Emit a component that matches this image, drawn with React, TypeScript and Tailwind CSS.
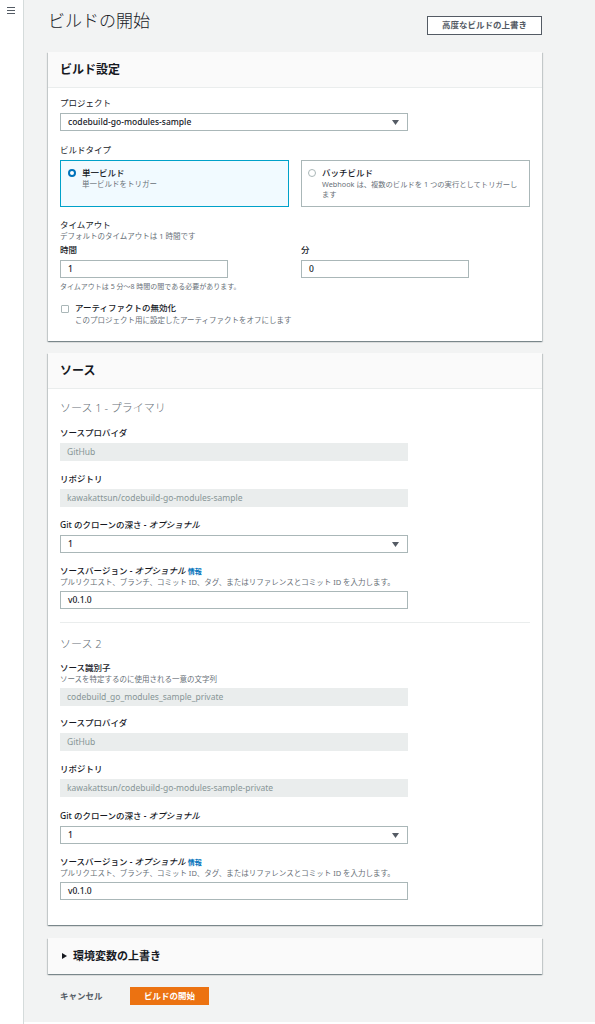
import type { ReactNode } from "react";

const cardShadow =
  "shadow-[0_1px_1px_0_rgba(0,28,36,0.3),1px_1px_1px_0_rgba(0,28,36,0.15),-1px_1px_1px_0_rgba(0,28,36,0.15)]";

function Triangle() {
  return (
    <svg width="7" height="5" viewBox="0 0 7 5" className="shrink-0">
      <path d="M0 0 H7 L3.5 5 Z" fill="#545b64" />
    </svg>
  );
}

function Label({ children, bold = true, className = "" }: { children: ReactNode; bold?: boolean; className?: string }) {
  return (
    <div className={`h-[12px] text-[8.5px] leading-[12px] text-[#16191f] ${bold ? "font-medium" : "font-normal"} ${className}`}>
      {children}
    </div>
  );
}

function Sub({ children }: { children: ReactNode }) {
  return <div className="h-[10px] text-[7.5px] leading-[10px] text-[#687078]">{children}</div>;
}

function Optional({ text }: { text: string }) {
  return (
    <>
      {text} <i className="font-medium">- オプショナル</i>
    </>
  );
}

function Select({ value, w = "w-[348px]" }: { value: string; w?: string }) {
  return (
    <div className={`mt-[4px] flex h-[18px] ${w} items-center justify-between border border-[#aab7b8] bg-white pl-[7px] pr-[8px]`}>
      <span className="text-[8.5px] font-medium text-[#16191f]">{value}</span>
      <Triangle />
    </div>
  );
}

function Input({ value, w = "w-[348px]" }: { value: string; w?: string }) {
  return (
    <div className={`mt-[4px] flex h-[18px] ${w} items-center border border-[#aab7b8] bg-white px-[7px]`}>
      <span className="text-[8.5px] font-medium text-[#16191f]">{value}</span>
    </div>
  );
}

function Disabled({ value }: { value: string }) {
  return (
    <div className="mt-[4px] flex h-[18px] w-[348px] items-center bg-[#eaeded] px-[7px]">
      <span className="text-[8.5px] text-[#879596]">{value}</span>
    </div>
  );
}

function CardHeader({ children }: { children: ReactNode }) {
  return (
    <div className="flex h-[36px] items-center border-b border-[#eaeded] bg-[#fafafa] px-[12px]">
      <h2 className="text-[12px] font-bold text-[#16191f]">{children}</h2>
    </div>
  );
}

function SourceVersion() {
  return (
    <>
      <Label className="mt-[12px]">
        <Optional text="ソースバージョン" />{" "}
        <span className="text-[7px] font-bold text-[#0073bb]">情報</span>
      </Label>
      <Sub>プルリクエスト、ブランチ、コミット ID、タグ、またはリファレンスとコミット ID を入力します。</Sub>
      <Input value="v0.1.0" />
    </>
  );
}

export default function App() {
  return (
    <div className="flex h-[1024px] w-[595px] bg-white font-['Noto_Sans','Noto_Sans_CJK_JP',sans-serif] text-[#16191f]">
      {/* サイドバー */}
      <aside className="w-[24px] shrink-0 border-r border-[#d5dbdb] bg-white pl-[7px] pt-[7px]">
        <div className="flex w-[8px] flex-col gap-[2px]">
          <span className="h-[1px] bg-[#545b64]" />
          <span className="h-[1px] bg-[#545b64]" />
          <span className="h-[1px] bg-[#545b64]" />
        </div>
      </aside>

      <main className="h-[1022px] flex-1 bg-[#f2f3f3] pl-[24px]">
        <div className="w-[494px]">
          <div className="flex h-[52px] items-start justify-between">
            <h1 className="pt-[9px] text-[17px] font-light leading-[24px] text-[#16191f]">ビルドの開始</h1>
            <button className="mt-[16px] h-[19px] w-[115px] border border-[#545b64] bg-white text-[8.5px] font-bold text-[#545b64]">
              高度なビルドの上書き
            </button>
          </div>

          {/* ビルド設定 */}
          <section className={`bg-white ${cardShadow}`}>
            <CardHeader>ビルド設定</CardHeader>
            <div className="px-[12px] pb-[16px] pt-[9px]">
              <Label bold={false}>プロジェクト</Label>
              <Select value="codebuild-go-modules-sample" />

              <Label bold={false} className="mt-[13px]">ビルドタイプ</Label>
              <div className="mt-[4px] grid h-[47px] grid-cols-[229px_229px] gap-[12px]">
                <div className="flex gap-[6px] border border-[#00a1c9] bg-[#f1faff] pl-[7px] pr-[8px] pt-[6px]">
                  <span className="mt-[2px] h-[8px] w-[8px] shrink-0 rounded-full border-[2.5px] border-[#0073bb] bg-white" />
                  <div>
                    <div className="text-[8.5px] font-medium leading-[12px]">単一ビルド</div>
                    <div className="text-[7.5px] leading-[10px] text-[#687078]">単一ビルドをトリガー</div>
                  </div>
                </div>
                <div className="flex gap-[6px] border border-[#aab7b8] bg-white pl-[6px] pr-[2px] pt-[6px]">
                  <span className="mt-[2px] h-[8px] w-[8px] shrink-0 rounded-full border border-[#aab7b8] bg-white" />
                  <div>
                    <div className="text-[8.5px] font-medium leading-[12px]">バッチビルド</div>
                    <div className="text-[7.3px] leading-[10px] text-[#687078]">
                      Webhook は、複数のビルドを 1 つの実行としてトリガーし
                      <br />
                      ます
                    </div>
                  </div>
                </div>
              </div>

              <Label bold={false} className="mt-[12px]">タイムアウト</Label>
              <div className="h-[11px] text-[7.5px] leading-[11px] text-[#687078]">デフォルトのタイムアウトは 1 時間です</div>
              <div className="mt-[2px] grid grid-cols-[229px_229px] gap-[12px]">
                <div>
                  <Label>時間</Label>
                  <Input value="1" w="w-[168px]" />
                </div>
                <div>
                  <Label>分</Label>
                  <Input value="0" w="w-[168px]" />
                </div>
              </div>
              <div className="mt-[4px] h-[10px] text-[7px] leading-[10px] text-[#687078]">
                タイムアウトは 5 分〜8 時間の間である必要があります。
              </div>

              <div className="mt-[10px] flex gap-[6px] pl-[1px]">
                <span className="mt-[3px] h-[8px] w-[8px] shrink-0 rounded-[1px] border border-[#aab7b8] bg-white" />
                <div>
                  <Label>アーティファクトの無効化</Label>
                  <div className="mt-[1px]">
                    <Sub>このプロジェクト用に設定したアーティファクトをオフにします</Sub>
                  </div>
                </div>
              </div>
            </div>
          </section>

          {/* ソース */}
          <section className={`mt-[12px] bg-white ${cardShadow}`}>
            <CardHeader>ソース</CardHeader>
            <div className="px-[12px] pb-[25px] pt-[12px]">
              <div className="h-[14px] text-[11px] font-light leading-[14px] text-[#687078]">ソース 1 - プライマリ</div>
              <Label className="mt-[12px]">ソースプロバイダ</Label>
              <Disabled value="GitHub" />
              <Label className="mt-[12px]">リポジトリ</Label>
              <Disabled value="kawakattsun/codebuild-go-modules-sample" />
              <Label className="mt-[12px]">
                <Optional text="Git のクローンの深さ" />
              </Label>
              <Select value="1" />
              <SourceVersion />

              <div className="mt-[13px] h-[1px] bg-[#eaeded]" />

              <div className="mt-[14px] h-[14px] text-[11px] font-light leading-[14px] text-[#687078]">ソース 2</div>
              <Label className="mt-[11px]">ソース識別子</Label>
              <Sub>ソースを特定するのに使用される一意の文字列</Sub>
              <Disabled value="codebuild_go_modules_sample_private" />
              <Label className="mt-[11px]">ソースプロバイダ</Label>
              <Disabled value="GitHub" />
              <Label className="mt-[12px]">リポジトリ</Label>
              <Disabled value="kawakattsun/codebuild-go-modules-sample-private" />
              <Label className="mt-[13px]">
                <Optional text="Git のクローンの深さ" />
              </Label>
              <Select value="1" />
              <SourceVersion />
            </div>
          </section>

          {/* 環境変数 */}
          <section className={`mt-[13px] ${cardShadow}`}>
            <div className="flex h-[36px] items-center gap-[6px] bg-[#fafafa] px-[14px]">
              <svg width="5" height="6" viewBox="0 0 5 6">
                <path d="M0 0 L5 3 L0 6 Z" fill="#16191f" />
              </svg>
              <h2 className="text-[11px] font-bold text-[#16191f]">環境変数の上書き</h2>
            </div>
          </section>

          <div className="mt-[13px] flex h-[18px] items-center pl-[12px]">
            <span className="w-[70px] text-[8.5px] font-semibold text-[#545b64]">キャンセル</span>
            <button className="h-[18px] w-[79px] bg-[#ec7211] text-[8.5px] font-bold text-white">ビルドの開始</button>
          </div>
        </div>
      </main>
    </div>
  );
}
